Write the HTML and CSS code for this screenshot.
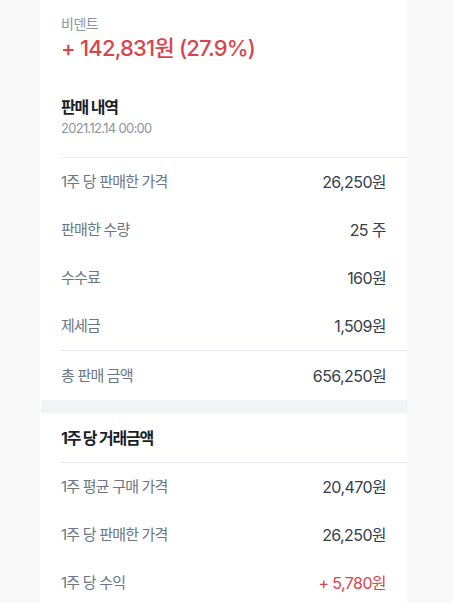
FILE: index.html
```html
<!DOCTYPE html>
<html lang="ko">
<head>
<meta charset="utf-8">
<link rel="stylesheet" href="styles.css">
</head>
<body>
<main class="card">
  <section class="summary">
    <div class="stock-name">비덴트</div>
    <div class="profit">+ 142,831원 (27.9%)</div>
  </section>
  <section class="history-head">
    <h2 class="title">판매 내역</h2>
    <div class="date">2021.12.14 00:00</div>
  </section>
  <div class="divider"></div>
  <div class="row"><span class="label">1주 당 판매한 가격</span><span class="value">26,250원</span></div>
  <div class="row"><span class="label">판매한 수량</span><span class="value">25 주</span></div>
  <div class="row"><span class="label">수수료</span><span class="value">160원</span></div>
  <div class="row"><span class="label">제세금</span><span class="value">1,509원</span></div>
  <div class="divider"></div>
  <div class="row row-total"><span class="label">총 판매 금액</span><span class="value">656,250원</span></div>
  <div class="band"></div>
  <section class="section-head">
    <h2 class="title">1주 당 거래금액</h2>
  </section>
  <div class="divider"></div>
  <div class="row"><span class="label">1주 평균 구매 가격</span><span class="value">20,470원</span></div>
  <div class="row"><span class="label">1주 당 판매한 가격</span><span class="value">26,250원</span></div>
  <div class="row"><span class="label">1주 당 수익</span><span class="value value-up">+ 5,780원</span></div>
</main>
</body>
</html>
```

FILE: styles.css
```css
html, body {
  margin: 0;
  padding: 0;
  background: #f8f8f9;
}
body {
  font-family: Inter, "Noto Sans CJK KR", "Noto Sans", sans-serif;
  -webkit-font-smoothing: antialiased;
}
.card {
  margin-left: 40px;
  width: 367px;
  min-height: 603px;
  background: #ffffff;
  display: flex;
  flex-direction: column;
}
.summary {
  padding: 14px 21px 0;
}
.stock-name {
  font-size: 14px;
  line-height: 20px;
  color: #8b95a1;
  letter-spacing: -0.5px;
}
.profit {
  margin-top: 1px;
  font-size: 22px;
  line-height: 27px;
  font-weight: 500;
  color: #d9444e;
  letter-spacing: -0.8px;
}
.history-head {
  padding: 34px 21px 19px;
}
.title {
  margin: 0;
  font-size: 16px;
  line-height: 22px;
  font-weight: 700;
  color: #191f28;
  letter-spacing: -1.2px;
}
.date {
  font-size: 13px;
  line-height: 20px;
  color: #8b95a1;
  letter-spacing: -0.7px;
}
.divider {
  height: 1px;
  margin-left: 21px;
  background: #e8eaed;
}
.row {
  height: 48px;
  padding: 0 21px;
  display: flex;
  align-items: center;
  justify-content: space-between;
}
.row-total {
  height: 49px;
}
.label {
  font-size: 15px;
  line-height: 20px;
  color: #6b7684;
  letter-spacing: -0.8px;
}
.value {
  font-size: 16px;
  line-height: 20px;
  color: #333d4b;
  letter-spacing: -0.6px;
}
.value-up {
  color: #d9444e;
}
.band {
  height: 13px;
  margin-left: 1px;
  background: #f2f3f5;
}
.section-head {
  height: 49px;
  padding: 0 21px;
  display: flex;
  align-items: center;
}
```
